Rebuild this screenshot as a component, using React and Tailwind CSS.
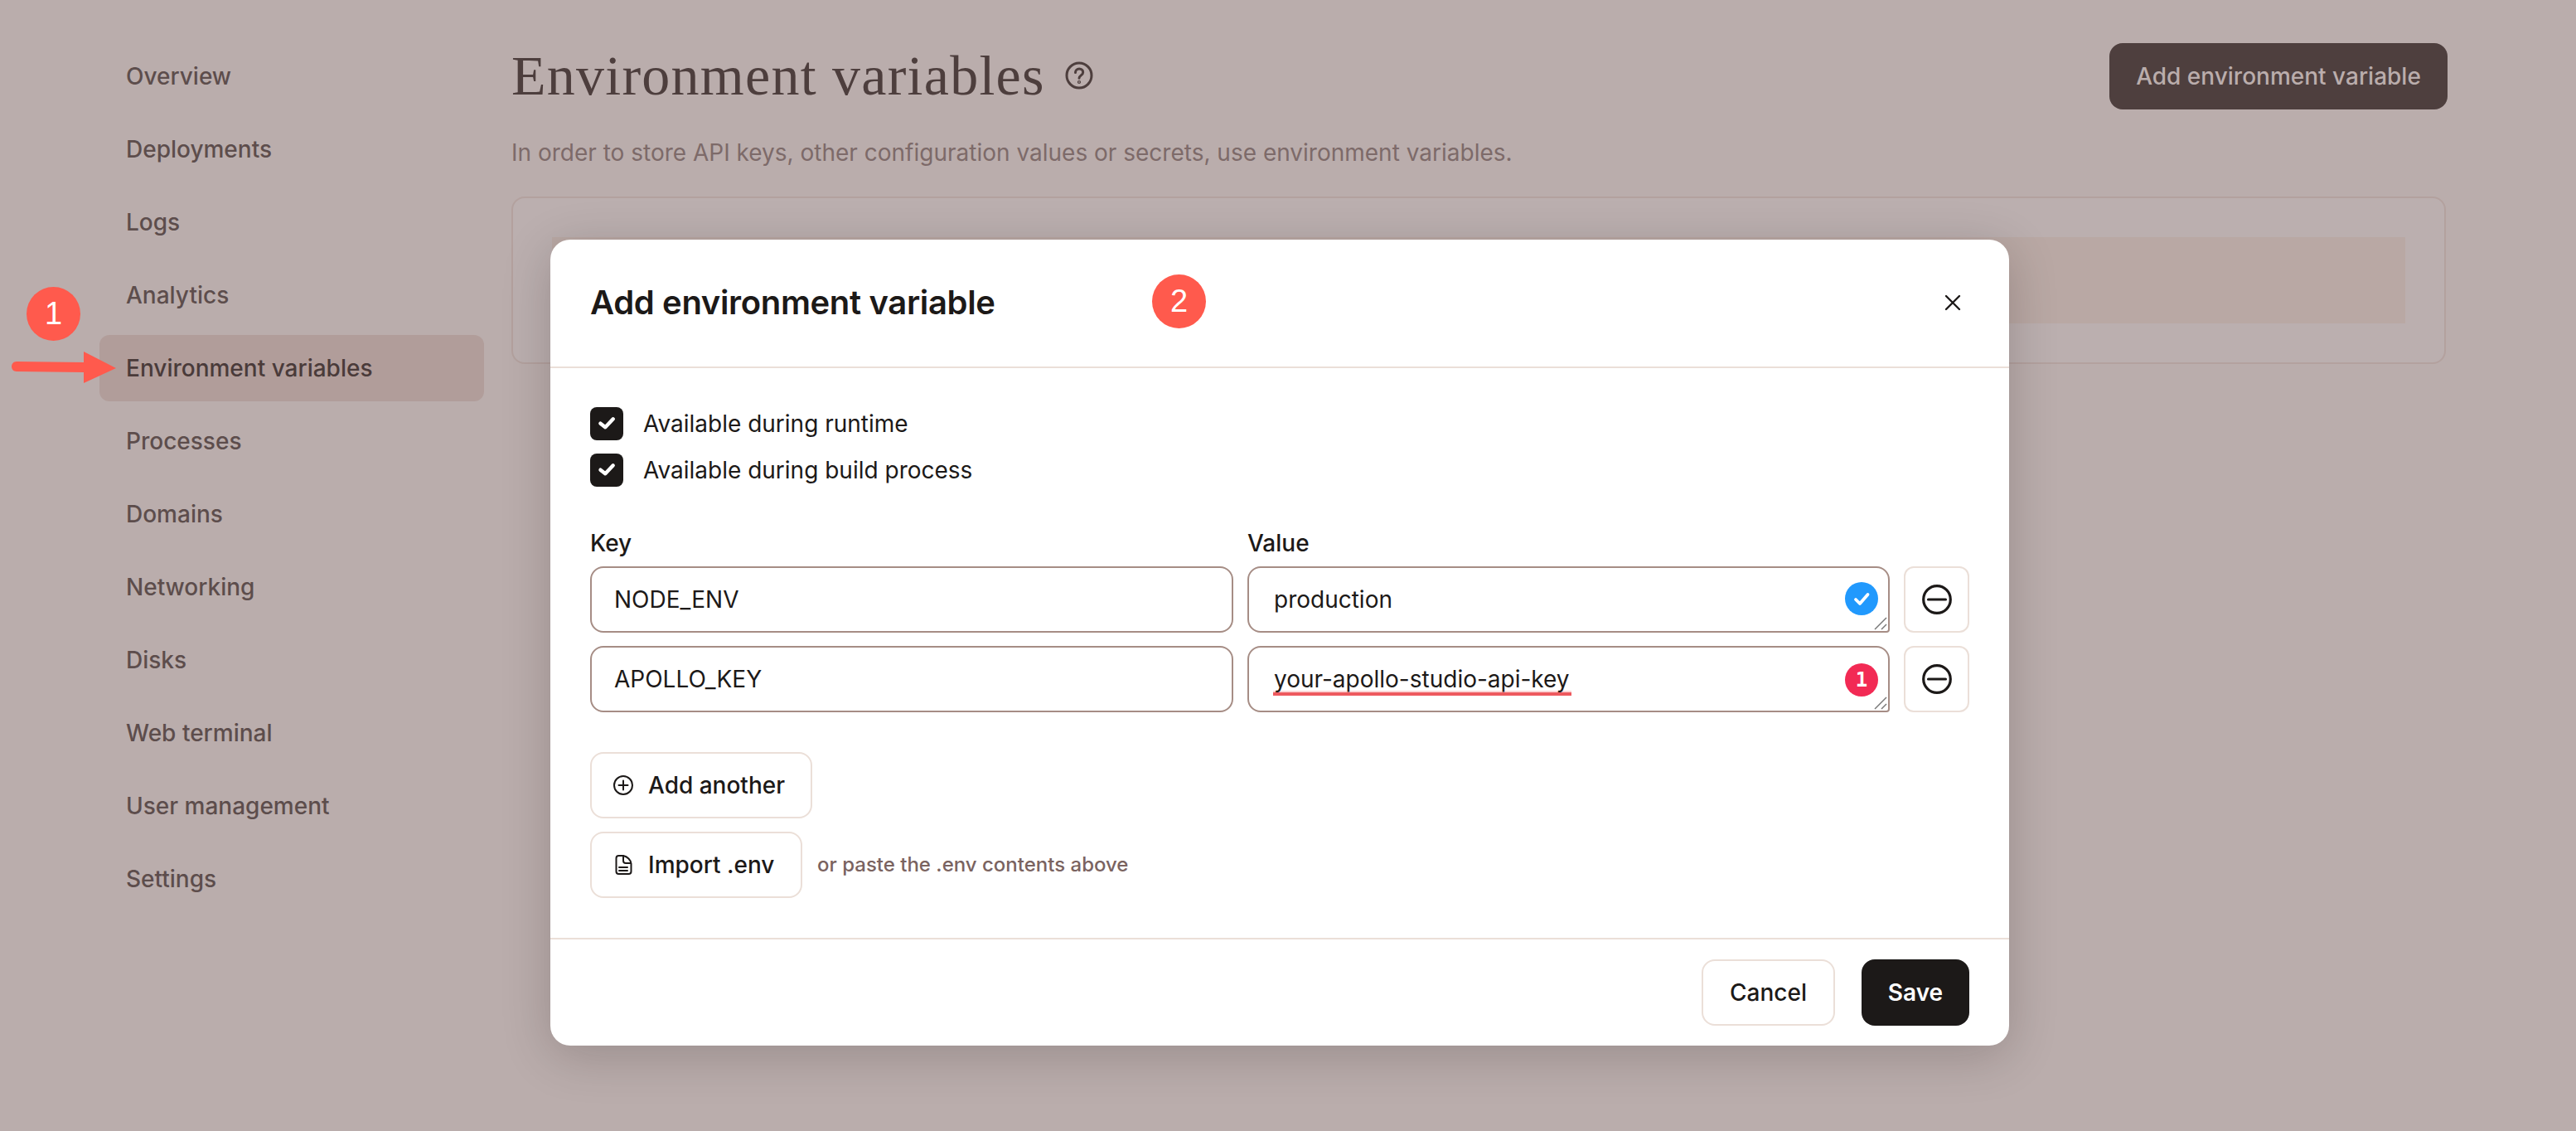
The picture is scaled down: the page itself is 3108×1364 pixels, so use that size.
import React from "react";

const navItems = ["Overview", "Deployments", "Logs", "Analytics", "Environment variables", "Processes", "Domains", "Networking", "Disks", "Web terminal", "User management", "Settings"];

function Checkbox({ label }) {
  return (
    <div className="flex items-center h-[40px] gap-[24px]">
      <div className="w-[40px] h-[40px] rounded-[8px] bg-[#1c1918]">
        <svg viewBox="0 0 40 40" className="w-[40px] h-[40px]" fill="none" stroke="#fff" strokeWidth="4.4" strokeLinecap="round" strokeLinejoin="round">
          <path d="M12.5 19.7 L18.3 24.3 L27.7 14.3" />
        </svg>
      </div>
      <span className="text-[28px] leading-[40px] text-[#1c1918]">{label}</span>
    </div>
  );
}

function MinusButton() {
  return (
    <div className="w-[79px] h-[80px] shrink-0 rounded-[12px] border-2 border-[#ebdfd8] flex items-center justify-center bg-white">
      <svg viewBox="0 0 36 36" className="w-[36px] h-[36px]" fill="none" stroke="#1c1918">
        <circle cx="18" cy="18" r="16.3" strokeWidth="3.2" />
        <path d="M7.5 18 H28.5" strokeWidth="3.2" strokeLinecap="round" />
      </svg>
    </div>
  );
}

function Resizer() {
  return (
    <svg viewBox="0 0 16 16" className="absolute right-[1px] bottom-[1px] w-[16px] h-[16px]" fill="none" stroke="#777" strokeWidth="1.4">
      <path d="M1 15 L15 1" />
      <path d="M9 15 L15 9" />
    </svg>
  );
}

function Field({ children, resize }) {
  return (
    <div className={`relative h-[80px] shrink-0 border-2 border-[#a68d85] flex items-center pr-[30px] text-[28px] text-[#1c1918] bg-white rounded-[16px] ${resize ? "w-[775px] rounded-br-[4px] pl-[30px]" : "w-[776px] pl-[27px]"}`}>
      {children}
      {resize && <Resizer />}
    </div>
  );
}

function OutlineButton({ icon, children, className }) {
  return (
    <div className={`h-[80px] rounded-[16px] border-2 border-[#ebdfd8] bg-white flex items-center text-[28px] font-medium text-[#1c1918] ${className}`}>
      {icon}
      {children}
    </div>
  );
}

export default function App() {
  return (
    <div className="relative w-[3108px] h-[1364px] overflow-hidden bg-[#baadac] flex pl-[120px] pt-[52px] [font-family:Inter,sans-serif]">
      {/* Sidebar */}
      <nav className="w-[464px] shrink-0 flex flex-col gap-[8px]">
        {navItems.map((n) => {
          const active = n === "Environment variables";
          return (
            <div key={n} className={`h-[80px] flex items-center px-[32px] text-[28px] font-medium rounded-[12px] ${active ? "bg-[#b19d9a] text-[#4a3b3a]" : "text-[#5d4d4c]"}`}>
              {n}
            </div>
          );
        })}
      </nav>

      {/* Main */}
      <main className="ml-[33px] w-[2336px] flex flex-col">
        <div className="flex items-center justify-between h-[80px]">
          <div className="flex items-center gap-[24px] pb-[2px]">
            <h1 className="text-[68px] leading-[80px] font-normal tracking-[1.25px] text-[#4d3e3d] [font-family:'Liberation_Serif',serif]">Environment variables</h1>
            <svg viewBox="0 0 34 34" className="w-[34px] h-[34px]" fill="none" stroke="#4d3e3d" strokeWidth="3" strokeLinecap="round">
              <circle cx="17" cy="17" r="15" />
              <path d="M12.5 13.5c0-2.6 2-4.4 4.6-4.4s4.6 1.7 4.6 4.1c0 3.6-4.7 3.7-4.7 7" />
              <circle cx="17" cy="25" r="0.6" fill="#4d3e3d" />
            </svg>
          </div>
          <div className="h-[80px] w-[408px] rounded-[16px] bg-[#4e3f3e] text-[#baadac] text-[28px] font-medium flex items-center justify-center">Add environment variable</div>
        </div>
        <p className="mt-[32px] text-[28px] leading-[40px] text-[#7d6a69]">In order to store API keys, other configuration values or secrets, use environment variables.</p>
        <div className="mt-[33px] w-[2334px] h-[202px] rounded-[16px] border-2 border-[#b3a19e] bg-[#bbafaf] p-[47px]">
          <div className="h-[104px] bg-[#b9a8a4]" />
        </div>
      </main>

      {/* Modal */}
      <div className="absolute left-[664px] top-[289px] w-[1760px] h-[972px] rounded-[24px] bg-white shadow-[0_12px_60px_rgba(20,10,10,0.2)] flex flex-col">
        <header className="h-[155px] shrink-0 border-b-2 border-[#ebdfd8] flex items-center justify-between pl-[48px] pr-[58px] pb-[2px]">
          <h2 className="text-[40px] font-semibold tracking-[-0.35px] text-[#1c1918]">Add environment variable</h2>
          <svg viewBox="0 0 20 20" className="w-[20px] h-[20px]" fill="none" stroke="#1c1918" strokeWidth="2.4" strokeLinecap="round">
            <path d="M2 2 L18 18 M18 2 L2 18" />
          </svg>
        </header>

        <div className="flex-1 px-[48px] pt-[47px] flex flex-col">
          <div className="flex flex-col gap-[16px]">
            <Checkbox label="Available during runtime" />
            <Checkbox label="Available during build process" />
          </div>

          <div className="flex mt-[48px] gap-[17px] h-[40px] items-center text-[28px] font-medium text-[#1c1918]">
            <span className="w-[776px]">Key</span>
            <span>Value</span>
          </div>

          <div className="mt-[8px] flex flex-col gap-[16px]">
            <div className="flex gap-[17px]">
              <Field>NODE_ENV</Field>
              <Field resize>
                <span className="flex-1">production</span>
                <span className="absolute right-[12px] top-[17px] w-[40px] h-[40px] rounded-full bg-[#2199fd] flex items-center justify-center">
                  <svg viewBox="0 0 40 40" className="w-[40px] h-[40px]" fill="none" stroke="#fff" strokeWidth="3.8" strokeLinecap="round" strokeLinejoin="round">
                    <path d="M13 21 L18 26 L27.5 15" />
                  </svg>
                </span>
              </Field>
              <MinusButton />
            </div>
            <div className="flex gap-[17px]">
              <Field>APOLLO_KEY</Field>
              <Field resize>
                <span className="absolute left-[29px] top-[54px] w-[360px] h-[4px] bg-[#ee5a5f]" />
                <span className="absolute left-[29px] top-[52px] w-[360px] h-[2px] bg-[#fbd5d6]" />
                <span className="relative flex-1">your-apollo-studio-api-key</span>
                <span className="absolute right-[12px] top-[19px] w-[40px] h-[40px] rounded-full bg-[#f22a54] flex items-center justify-center text-white text-[24px] font-bold [font-family:'DejaVu_Sans_Mono',monospace]">1</span>
              </Field>
              <MinusButton />
            </div>
          </div>

          <OutlineButton
            className="mt-[48px] w-[268px] pl-[26px] gap-[18px]"
            icon={
              <svg viewBox="0 0 24 24" className="w-[24px] h-[24px]" fill="none" stroke="#1c1918" strokeWidth="2" strokeLinecap="round">
                <circle cx="12" cy="12" r="11" />
                <path d="M12 6.5 V17.5 M6.5 12 H17.5" />
              </svg>
            }
          >
            Add another
          </OutlineButton>
          <div className="mt-[16px] flex items-center gap-[18px]">
            <OutlineButton
              className="w-[256px] pl-[26px] gap-[18px]"
              icon={
                <svg viewBox="0 0 24 24" className="w-[24px] h-[24px]" fill="none" stroke="#1c1918" strokeWidth="2" strokeLinejoin="round" strokeLinecap="round">
                  <path d="M3.5 4a3 3 0 0 1 3-3h5.5c5 1 9 5 9.5 9.5V20a3 3 0 0 1-3 3H6.5a3 3 0 0 1-3-3Z" />
                  <path d="M12 1v6a3 3 0 0 0 3 3h6" />
                  <path d="M7 15h10M7 19h10" />
                </svg>
              }
            >
              Import .env
            </OutlineButton>
            <span className="text-[24px] font-medium text-[#7a6360]">or paste the .env contents above</span>
          </div>
        </div>

        <footer className="h-[130px] shrink-0 border-t-2 border-[#ebdfd8] flex items-center justify-end gap-[32px] pr-[48px]">
          <div className="w-[161px] h-[80px] rounded-[16px] border-2 border-[#ebdfd8] flex items-center justify-center text-[28px] font-medium text-[#1c1918]">Cancel</div>
          <div className="w-[130px] h-[80px] rounded-[16px] bg-[#1c1918] flex items-center justify-center text-[28px] font-semibold text-white">Save</div>
        </footer>
      </div>

      {/* Annotations */}
      <div className="absolute left-[32px] top-[346px] w-[65px] h-[65px] rounded-full bg-[#ff5a4d] text-white text-[38px] flex items-center justify-center [font-family:'Liberation_Sans',sans-serif]">1</div>
      <div className="absolute left-[1390px] top-[331px] w-[65px] h-[65px] rounded-full bg-[#ff5a4d] text-white text-[38px] flex items-center justify-center [font-family:'Liberation_Sans',sans-serif]">2</div>
      <svg className="absolute left-[12px] top-[420px] w-[130px] h-[46px]" viewBox="0 0 130 46" fill="#ff5a4d">
        <path d="M8 16 L89 17 L89 4 L128 24 L89 42 L89 29 L8 28 C0 28 0 16 8 16 Z" />
      </svg>
    </div>
  );
}
